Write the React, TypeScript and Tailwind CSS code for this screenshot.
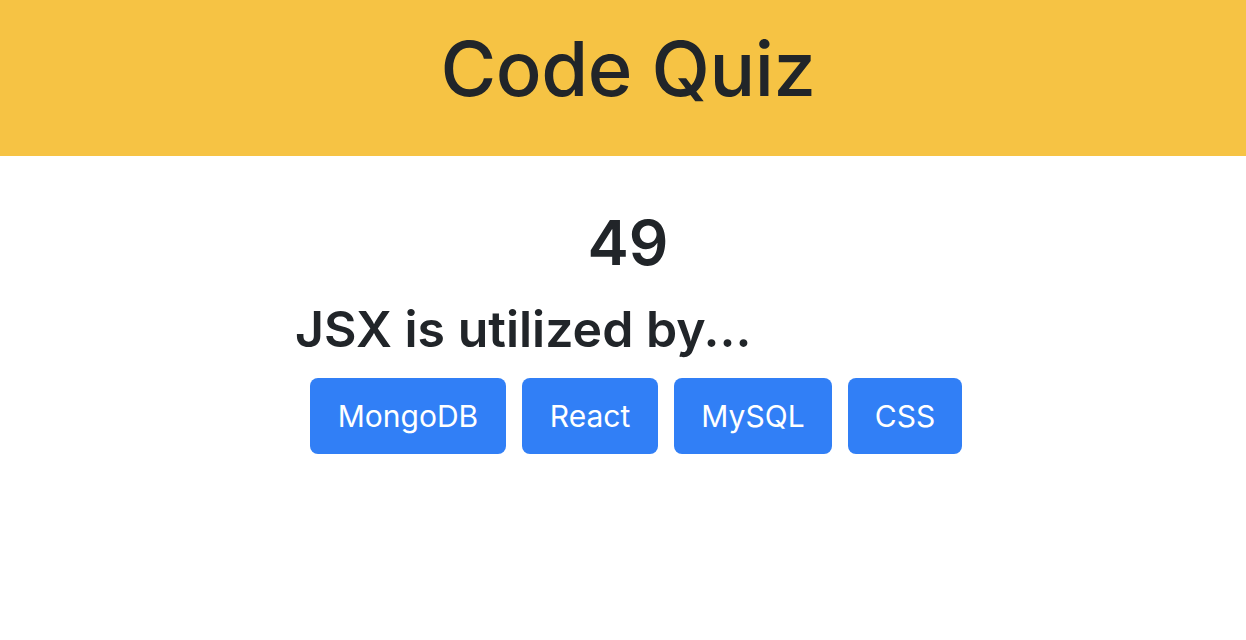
const answers = [
  { label: "MongoDB", w: "w-[196px]" },
  { label: "React", w: "w-[136px]" },
  { label: "MySQL", w: "w-[158px]" },
  { label: "CSS", w: "w-[114px]" },
];

export default function App() {
  return (
    <div className="min-h-screen bg-white text-[#212529] font-['Inter','Noto_Sans',sans-serif]">
      <header className="h-[156px] bg-[#f6c344] flex items-center justify-center">
        <h1 className="text-[76px] font-medium leading-none tracking-[-0.5px] pb-[20px] pl-[10px]">Code Quiz</h1>
      </header>
      <main className="flex flex-col items-center pt-[56px]">
        <div className="text-[62px] font-semibold leading-none pl-[10px]">49</div>
        <div className="w-[682px] pl-[13px] mt-[30px]">
          <h2 className="text-[50px] font-semibold leading-none">JSX is utilized by...</h2>
          <div className="flex gap-4 mt-[24px] pl-[15px]">
            {answers.map((a) => (
              <button
                key={a.label}
                className={`${a.w} shrink-0 h-[76px] flex items-center justify-center rounded-[8px] bg-[#317ff6] text-white text-[30px] leading-none`}
              >
                {a.label}
              </button>
            ))}
          </div>
        </div>
      </main>
    </div>
  );
}
